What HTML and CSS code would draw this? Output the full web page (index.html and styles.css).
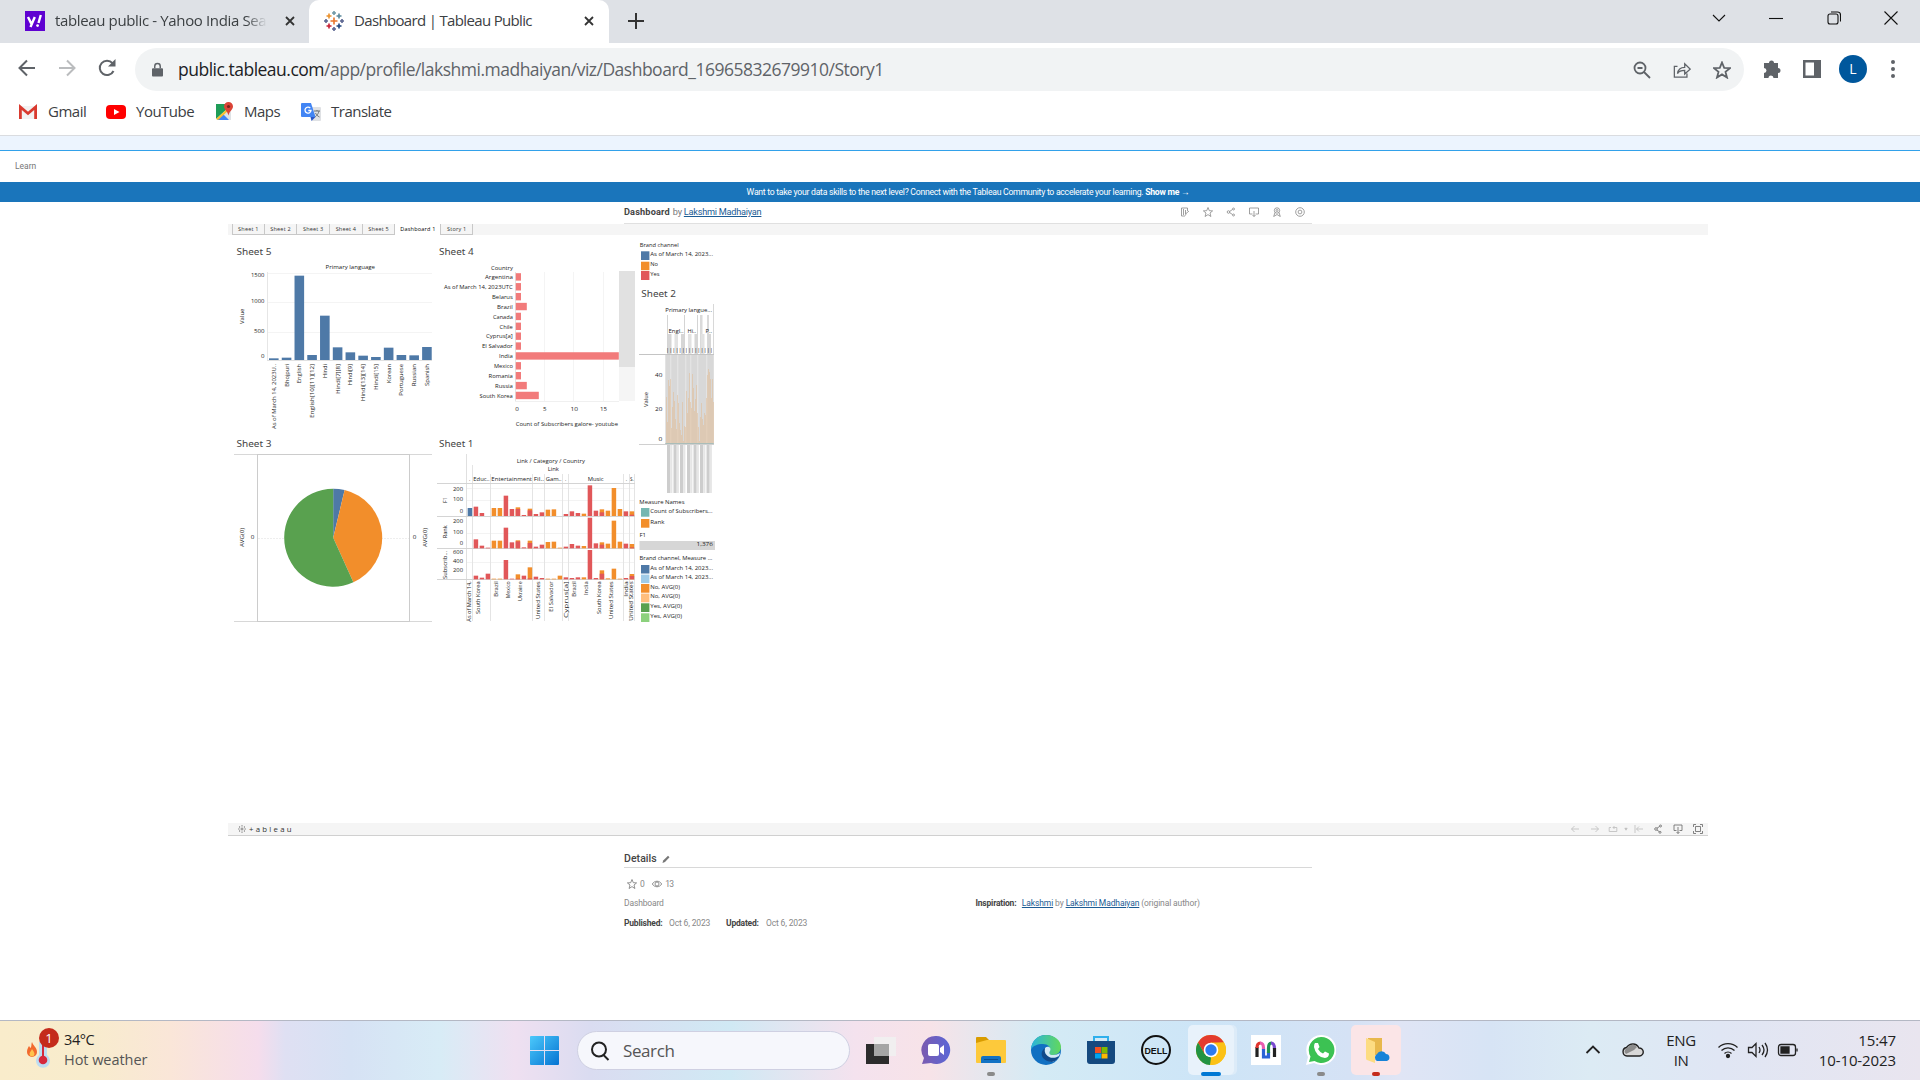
FILE: index.html
```html
<!DOCTYPE html>
<html lang="en">
<head>
<meta charset="utf-8">
<title>Dashboard | Tableau Public</title>
<link rel="stylesheet" href="styles.css">
</head>
<body>
<header class="tabstrip">
  <div class="tab">
    <svg class="fav" viewBox="0 0 20 20"><path fill="#5f01d1" d="M0 0h20v20H0z"/><path d="M3 6l3.200 6.400M9.800 6L5.500 16M13.500 12l2.300-8" stroke="#fff" stroke-width="2.400" fill="none"/><circle cx="12.600" cy="14.600" r="1.400" fill="#fff"/></svg>
    <span class="tab-title faded t-yahoo">tableau public - Yahoo India Sea</span>
    <svg class="x" viewBox="0 0 10 10"><path d="M1 1l8 8M9 1l-8 8"/></svg>
  </div>
  <div class="tab active">
    <svg class="fav" viewBox="0 0 20 20" fill="none" stroke-width="1.600"><path stroke="#e8762c" d="M10 6.500v7M6.500 10h7"/><path stroke="#c72035" d="M5 12.500v5M2.500 15h5"/><path stroke="#eb912c" d="M5 2.500v5M2.500 5h5"/><path stroke="#59879b" d="M15 2.500v5M12.500 5h5"/><path stroke="#1f457e" d="M15 12.500v5M12.500 15h5"/><path stroke="#7199a6" d="M10 0v4M8 2h4"/><path stroke="#5b6591" d="M10 16v4M8 18h4M18 8v4M16 10h4M2 8v4M0 10h4"/></svg>
    <span class="tab-title t-tableau">Dashboard | Tableau Public</span>
    <svg class="x" viewBox="0 0 10 10"><path d="M1 1l8 8M9 1l-8 8"/></svg>
  </div>
  <svg class="plus" viewBox="0 0 16 16"><path d="M8 0v16M0 8h16"/></svg>
  <div class="winctl">
    <svg viewBox="0 0 14 14"><path d="M1 4l6 6 6-6"/></svg>
    <svg viewBox="0 0 14 14"><path d="M0 7.500h14"/></svg>
    <svg viewBox="0 0 14 14"><rect x="1" y="3" width="10" height="10" rx="2"/><path d="M4 1h6.500a3 3 0 0 1 3 3v6.500"/></svg>
    <svg viewBox="0 0 14 14"><path d="M.5.500l13 13M13.500.500l-13 13"/></svg>
  </div>
</header>
<div class="toolbar">
  <nav class="navbtns">
    <svg viewBox="0 0 18 18"><path d="M17 9H2M9 1.500L1.500 9 9 16.500"/></svg>
    <svg class="off" viewBox="0 0 18 18"><path d="M1 9h15M9 1.500L16.500 9 9 16.500"/></svg>
    <svg viewBox="0 0 18 18"><path d="M15.500 12A7.200 7.200 0 1 1 14.500 4.200L16 6"/><path fill="#5f6368" stroke="none" d="M17.500 0v7.500H10z"/></svg>
  </nav>
  <div class="omnibox">
    <svg class="lock" viewBox="0 0 12 16"><path fill="#5f6368" d="M1 6h10q1 0 1 1v7q0 1-1 1H1q-1 0-1-1V7q0-1 1-1z"/><path fill="none" stroke="#5f6368" stroke-width="1.600" d="M3 6V4a3 3 0 0 1 6 0v2"/></svg>
    <span class="url"><b>public.tableau.com</b>/app/profile/lakshmi.madhaiyan/viz/Dashboard_16965832679910/Story1</span>
    <div class="omni-icons">
      <svg viewBox="0 0 18 18"><circle cx="7" cy="7" r="5.500"/><path d="M11 11l6 6M4.500 7h5"/></svg>
      <svg viewBox="0 0 20 20" class="share"><path d="M5 6H1.500v12h14v-4M5 14c.5-4 3-7 8-7V3l6 6-6 5.500v-4c-4 0-6.500 1-8 3.500z"/></svg>
      <svg viewBox="0 0 18 18"><path d="M9 1.500l2.200 5.300 5.800.4-4.500 3.700 1.500 5.600L9 13.400l-5 3.100 1.500-5.600L1 7.200l5.800-.4z"/></svg>
    </div>
  </div>
  <div class="ext">
    <svg viewBox="0 0 20 20"><path fill="#5f6368" d="M2 4h5a2.500 2.500 0 1 1 5 0h4v5a2.500 2.500 0 1 1 0 5v5h-4.500a2.500 2.500 0 0 0-5 0H2v-5a2.500 2.500 0 0 0 0-5z"/></svg>
    <svg viewBox="0 0 20 20"><path fill="#5f6368" fill-rule="evenodd" d="M1 1h18v18H1zM3.500 3.500v13H12v-13z"/></svg>
    <span class="avatar">L</span>
    <svg class="kebab" viewBox="0 0 20 20" fill="#5f6368"><circle cx="10" cy="3" r="2"/><circle cx="10" cy="10" r="2"/><circle cx="10" cy="17" r="2"/></svg>
  </div>
</div>
<nav class="bookmarks">
  <a class="bm b1"><svg viewBox="0 0 20 20"><path fill="#f2f2f2" d="M1 4h18v13H1z"/><path fill="none" stroke="#d93a2f" stroke-width="2.800" d="M2.400 17V5l7.600 6.500L17.600 5v12"/></svg><span>Gmail</span></a>
  <a class="bm b2"><svg viewBox="0 0 20 20"><rect y="3" width="20" height="14" rx="4" fill="#f00"/><path fill="#fff" d="M8 7l5.500 3L8 13z"/></svg><span>YouTube</span></a>
  <a class="bm b3"><svg viewBox="0 0 20 20"><path fill="#1f9d58" d="M2 2h12v9L3 17q-1 0-1-1z"/><path fill="#dfe3e6" d="M2 17L14 6l3 4v8z"/><path fill="#4285f4" d="M3 18l6-6 6 6z"/><path fill="#fbc02d" d="M2 17L13 7l1 2-10 9z"/><path fill="#db4437" d="M14.500 0a4.500 4.500 0 0 1 4.500 4.500c0 3-3.500 4.500-4.500 9-1-4.500-4.500-6-4.500-9A4.500 4.500 0 0 1 14.500 0z"/><circle cx="14.500" cy="4.500" r="1.600" fill="#7b231c"/></svg><span>Maps</span></a>
  <a class="bm b4"><svg viewBox="0 0 20 20"><path fill="#dfe1e4" d="M8 5h11q1 0 1 1v12q0 1-1 1h-8z"/><path fill="#4285f4" d="M1 1h9l4.500 14H1q-1 0-1-1V2q0-1 1-1z"/><path fill="#2a56c6" d="M9.500 15h5l-4 4z"/><path d="M9.300 6.200A3 3 0 1 0 10 8.500H7.300" stroke="#fff" stroke-width="1.300" fill="none"/><path d="M13 9h6M16 8v1M18 9c-1 4-3 5-4 6M14.500 11c1 2 2 3 4 4" stroke="#6b7277" fill="none"/></svg><span>Translate</span></a>
</nav>
<div class="notice"></div>
<div class="learn"><span>Learn</span></div>
<div class="banner"><span>Want to take your data skills to the next level? Connect with the Tableau Community to accelerate your learning. <b>Show me →</b></span></div>
<main class="page">
  <div class="vizhead">
    <p class="viz-title"><b>Dashboard</b> by <a>Lakshmi Madhaiyan</a></p>
    <div class="actions">
      <svg viewBox="0 0 10 10"><path d="M5 9H1.500V1h6v3M3.500 2v6M5.500 3v4M5.500 8.500l.5-2 3-2.500"/></svg>
      <svg viewBox="0 0 10 10"><path d="M5 .500l1.300 3.200 3.300.2L7 6l.9 3.500L5 7.600 2.100 9.500 3 6 .4 3.900l3.300-.2z"/></svg>
      <svg viewBox="0 0 10 10"><circle cx="2.500" cy="5" r="1.300"/><circle cx="7.500" cy="2" r="1"/><circle cx="7.500" cy="8" r="1"/><path d="M3.500 4.500l3-2M3.500 5.500l3 2"/></svg>
      <svg viewBox="0 0 10 10"><path d="M3.500 7H.5V1h9v6h-3M5 4v5.500M3.500 8L5 9.500 6.500 8"/></svg>
      <svg viewBox="0 0 10 10"><circle cx="5" cy="3.500" r="2.700"/><circle cx="5" cy="3.500" r="1"/><path d="M3 5.500L1.700 9.500 5 7.500l3.300 2L7 5.500"/></svg>
      <svg viewBox="0 0 10 10"><circle cx="5" cy="5" r="4.300"/><circle cx="5" cy="5" r="1.900"/></svg>
    </div>
  </div>
  <div class="sheets"><span>Sheet 1</span><span>Sheet 2</span><span>Sheet 3</span><span>Sheet 4</span><span>Sheet 5</span><span class="on">Dashboard 1</span><span class="story">Story 1</span></div>
  <div class="dash">
    <div class="grid">
      <svg id="sheet5" viewBox="228 236 205 194" width="205" height="194"></svg>
      <svg id="sheet4" viewBox="433 236 203 194" width="203" height="194"></svg>
      <svg id="sheet3" viewBox="228 430 205 200" width="205" height="200"></svg>
      <svg id="sheet1" viewBox="433 430 203 200" width="203" height="200"></svg>
    </div>
    <svg id="side" viewBox="636 236 82 394" width="82" height="394"></svg>
  </div>
  <div class="vizbar">
    <svg class="mark" viewBox="0 0 10 10"><path d="M5 3v4M3 5h4M5 0v2M5 8v2M0 5h2M8 5h2M2 1.500v2M8 1.500v2M2 6.500v2M8 6.500v2"/></svg>
    <span class="wordmark">+ableau</span>
    <div class="viztools">
      <svg class="dim" viewBox="0 0 10 10"><path d="M9 5H1.500M4.500 2l-3 3 3 3"/></svg>
      <svg class="dim" viewBox="0 0 10 10"><path d="M1 5h7.500M5.500 2l3 3-3 3"/></svg>
      <svg class="dim revert" viewBox="0 0 10 10"><path d="M3 3.500H1.200v4h7.600v-4H5M6.500 2L5 3.500 6.500 5"/></svg>
      <svg class="dim caret" viewBox="0 0 5 10"><path fill="#bbb" d="M1 4h3L2.500 6.500z"/></svg>
      <svg class="dim" viewBox="0 0 10 10"><path d="M1 1v8M9 5H2.500M5 2.500L2.500 5 5 7.500"/></svg>
      <svg viewBox="0 0 10 10"><circle cx="3" cy="5" r="1.300"/><circle cx="7.500" cy="2" r="1"/><circle cx="7" cy="8.300" r="1"/><path d="M4 4.200L6.500 2.500M4 6l2.200 1.600"/></svg>
      <svg viewBox="0 0 10 10"><path d="M3.500 6.500H1V1h8v5.500H6.500M5 3v6.500M3.500 8L5 9.500 6.500 8"/></svg>
      <svg viewBox="0 0 10 10"><path d="M2.500 2.500h5v5h-5zM.5 3V.500H3M7 .500h2.500V3M.5 7v2.500H3M7 9.500h2.500V7"/></svg>
    </div>
  </div>
  <section class="details">
    <h2>Details <svg viewBox="0 0 8 8"><path d="M.5 8l.7-2.500L6 .700 7.500 2.200 3 7z" fill="#777"/></svg></h2>
    <div class="stats">
      <svg viewBox="0 0 10 10"><path d="M5 .500l1.300 3.200 3.300.2L7 6l.9 3.500L5 7.600 2.100 9.500 3 6 .4 3.900l3.300-.2z"/></svg><span>0</span>
      <svg class="eye" viewBox="0 0 10 10"><path d="M.3 5C2.500 1.300 7.500 1.300 9.700 5 7.500 8.700 2.500 8.700.3 5z"/><circle cx="5" cy="5" r="2"/></svg><span>13</span>
    </div>
    <div class="cols">
      <div class="col"><p class="l1">Dashboard</p><p class="l2"><b>Published:</b><span>Oct 6, 2023</span><b class="upd">Updated:</b><span>Oct 6, 2023</span></p></div>
      <p class="insp"><b>Inspiration:</b> <a>Lakshmi</a> by <a>Lakshmi Madhaiyan</a> (original author)</p>
    </div>
  </section>
</main>
<footer class="taskbar">
  <div class="weather">
    <div class="wicon">
      <svg viewBox="0 0 36 40"><path fill="#f26a2e" d="M7 12c1 4 5 5 5 10a5 5 0 0 1-10 0c0-3 1-4 2-6 1 1 1 2 1.500 2C7 16 6 14 7 12z"/><path fill="#ffc34d" d="M7 19c1 2 2.500 3 2.500 5a2.500 2.500 0 0 1-5 0c0-2 2-3 2.500-5z"/><path fill="#bcdcf2" d="M14 12h8v13a7 7 0 1 1-8 0z"/><circle cx="18" cy="30" r="4.300" fill="#d5283c"/><path fill="#d5283c" d="M17 14h2v14h-2z"/></svg>
      <span class="badge">1</span>
    </div>
    <div class="wtext"><span>34°C</span><span class="sub">Hot weather</span></div>
  </div>
  <div class="start"><svg viewBox="0 0 29 29"><defs><linearGradient id="wg" x1="0" y1="0" x2="1" y2="1"><stop offset="0" stop-color="#4cc9fb"/><stop offset="1" stop-color="#0573d2"/></linearGradient></defs><path fill="url(#wg)" d="M1 0h13v14H0V1q0-1 1-1zM15 0h13q1 0 1 1v13H15zM0 15h14v14H1q-1 0-1-1zM15 15h14v13q0 1-1 1H15z"/></svg></div>
  <div class="search"><svg viewBox="0 0 20 20"><circle cx="9" cy="8.500" r="7"/><path d="M13.500 14l5 5"/></svg><span>Search</span></div>
  <div class="apps">
    <div class="app"><svg viewBox="0 0 30 30"><path fill="#2c2c2c" d="M0 9h23v20H0z"/><path fill="#f0f0f0" fill-opacity=".92" d="M8 2h22v19H8z"/><path fill="#a5a5a5" d="M8 9h15v12H8z"/></svg></div>
    <div class="app"><svg viewBox="0 0 30 30"><defs><linearGradient id="cg" x1="0" y1="0" x2="1" y2="0"><stop offset="0" stop-color="#7b5bb0"/><stop offset="1" stop-color="#5a66d6"/></linearGradient></defs><path fill="url(#cg)" d="M15 1a14 14 0 1 1-5 27l-9 1 2-6A14 14 0 0 1 15 1z"/><rect x="7" y="9" width="11" height="12" rx="2" fill="#fff"/><path fill="#fff" d="M19 13l4-3v10l-4-3z"/></svg></div>
    <div class="app"><svg viewBox="0 0 30 30"><path fill="#d99c00" d="M0 3q0-1 1-1h9l3 3v5H0z"/><path fill="#fdc93b" d="M0 8l11-3h18q1 0 1 1v21q0 1-1 1H1q-1 0-1-1z"/><path fill="#1272c4" d="M5 28v-5q0-2 2-2h16q2 0 2 2v5z"/><path fill="#0b4f91" d="M8 24h14v1H8z"/></svg><i class="dot"></i></div>
    <div class="app"><svg viewBox="0 0 30 30"><defs><linearGradient id="eg" x1="0" y1="0" x2="1" y2="0"><stop offset="0" stop-color="#2bb5dc"/><stop offset="1" stop-color="#62d85c"/></linearGradient></defs><circle cx="15" cy="15" r="15" fill="#1170c2"/><path fill="url(#eg)" d="M0 14C1 5 7 0 15 0c9 0 15 6 15 12 0 5-4 8-8 8-5 0-4-2-3-4 1-4-2-7-7-7-6 0-10 2-12 5z"/><path fill="#d3eaf6" d="M14 13c3-3 7 0 5 3-1 2-1 4 3 4 3 0 5-1 7-2-1 4-4 8-8 9-6-1-10-8-7-14z"/><path fill="#114a8b" d="M14 13c-6 4-4 13 7 14 4-1 6-3 7-6-8 5-16-1-14-8z"/></svg></div>
    <div class="app"><svg viewBox="0 0 30 30"><path d="M8 8V2h14v6" stroke="#2fb0ec" stroke-width="2" fill="none"/><path fill="#15497f" d="M1 6h28v20q0 3-3 3H4q-3 0-3-3z"/><path fill="#f25022" d="M9 12h6v6H9z"/><path fill="#7fba00" d="M15.500 12h6v6h-6z"/><path fill="#00a4ef" d="M9 18.500h6v5H9z"/><path fill="#ffb900" d="M15.500 18.500h6v5h-6z"/></svg></div>
    <div class="app"><svg viewBox="0 0 30 30"><circle cx="15" cy="15" r="14" fill="none" stroke="#111" stroke-width="2"/><text x="15" y="18.500" text-anchor="middle" textLength="23" lengthAdjust="spacingAndGlyphs" class="dell">DELL</text></svg></div>
    <div class="app cur"><svg viewBox="0 0 30 30"><circle cx="15" cy="15" r="15" fill="#fbc116"/><path fill="#e33b2e" d="M2 7.500A15 15 0 0 1 28 7.500H15l-6.500 11.200z"/><path fill="#229342" d="M2 7.500l6.500 11.200L15 22.500 14 30A15 15 0 0 1 2 7.500z"/><path fill="#fbc116" d="M28 7.500A15 15 0 0 1 14 30l7.500-11.300L20 8z"/><circle cx="15" cy="15" r="7.300" fill="#fff"/><circle cx="15" cy="15" r="5.700" fill="#2c7bf0"/></svg><i class="bar"></i></div>
    <div class="app"><svg viewBox="0 0 30 30"><path fill="#fff" d="M0 0h30v30H0z"/><g fill="none" stroke-width="3.200"><path stroke="#222" d="M6 22V12"/><path stroke="#e0352f" d="M6 13q0-5 3.500-5"/><path stroke="#e95cb0" d="M9 8q3.500 0 3.500 5v2"/><path stroke="#2a63d6" d="M12.500 14v8h5v-5"/><path stroke="#219150" d="M17.500 18v-5q0-5 3-5"/><path stroke="#7a4bd0" d="M20 8q3.500 0 3.500 6"/><path stroke="#222" d="M23.500 13v9"/></g></svg></div>
    <div class="app"><svg viewBox="0 0 30 30"><path fill="#fff" d="M15 0a15 15 0 1 1-7 28l-8 2 2-8A15 15 0 0 1 15 0z"/><path fill="#3cc253" d="M15 2a13 13 0 1 1-6.500 24L3 27l1.500-5.500A13 13 0 0 1 15 2z"/><path fill="#fff" d="M9 8h3l1.500 4-1.500 2q2 3.500 5 4.500l2-2 4 2q0 4-4 4.500Q10 22 8 12q0-3 1-4z"/></svg><i class="dot"></i></div>
    <div class="app alert"><svg viewBox="0 0 30 30"><path fill="#e8b84c" d="M7 3h14v17H7z"/><path fill="#fddc82" d="M5 3l9 4v21l-8-3q-1 0-1-2z"/><path fill="#1683d8" d="M16 26a4 4 0 0 1 0-7 5 5 0 0 1 9 0 3.600 3.600 0 0 1 1 7z"/></svg><i class="dot red"></i></div>
  </div>
  <div class="tray">
    <svg viewBox="0 0 22 22"><path d="M4.500 14L11 7.500 17.500 14" stroke-width="1.800"/></svg>
    <svg class="cloud" viewBox="0 0 22 22"><path fill="#d8d8d8" stroke-width="1.400" d="M5 17a4.300 4.300 0 0 1-.5-8.500Q7 5 11 5t6 4a4 4 0 0 1 .5 8z"/><path fill="#8c8c8c" stroke="none" d="M2.500 13Q3 9 6 8.500 10 3 15 8l-3 3-8 4z"/></svg>
    <span class="lang">ENG<br>IN</span>
    <svg class="wifi" viewBox="0 0 22 22"><path d="M1.500 8.500a13.500 13.500 0 0 1 19 0M4.500 11.500a9.200 9.200 0 0 1 13 0M7.500 14.500a5 5 0 0 1 7 0"/><circle cx="11" cy="17" r="1.500" fill="#222"/></svg>
    <svg viewBox="0 0 22 22"><path d="M1.500 8.500H5l4-4v13l-4-4H1.500zM12 8q2 3 0 6M15 6q4 5 0 10M18 4q5 7 0 14"/></svg>
    <svg viewBox="0 0 22 22"><rect x="1.500" y="5.500" width="17" height="11" rx="2.500"/><path fill="#222" d="M4 8h8v6H4zM20 9.500v3"/></svg>
    <span class="clock">15:47<br>10-10-2023</span>
  </div>
</footer>
<script src="charts.js"></script>
</body>
</html>
```
FILE: styles.css
```css
* { box-sizing: border-box; }
body { margin: 0; width: 1920px; height: 1080px; overflow: hidden; display: flex; flex-direction: column; background: #fff; font-family: "Open Sans", "Noto Sans", sans-serif; }
p, h2 { margin: 0; }
svg { flex: none; display: block; }

.tabstrip { height: 43px; background: #dee1e6; display: flex; flex: none; color: #3c4043; font-size: 15px; }
.tab { display: flex; align-items: center; width: 309px; padding: 0 14px 2px 25px; }
.tab.active { width: 300px; background: #fff; border-radius: 10px 10px 0 0; padding: 0 15px 2px; }
.fav { width: 20px; height: 20px; }
.tab-title { margin-left: 10px; margin-top: -2px; white-space: nowrap; flex: 1; }
.t-yahoo { letter-spacing: -.36px; }
.t-tableau { letter-spacing: -.66px; }
.faded { flex: none; width: 212px; overflow: hidden; margin-right: 18px; -webkit-mask-image: linear-gradient(90deg, #000 90%, transparent); }
.x { width: 10px; height: 10px; stroke: #333; stroke-width: 1.8; }
.plus { width: 16px; height: 16px; margin: 13px 0 0 19px; stroke: #333; stroke-width: 2; }
.winctl { margin-left: auto; display: flex; gap: 43.3px; padding: 11px 22px 0 0; }
.winctl svg { width: 14px; height: 14px; fill: none; stroke: #111; stroke-width: 1.1; }

.toolbar { height: 53px; flex: none; display: flex; align-items: center; }
.navbtns { display: flex; gap: 22px; padding-left: 18px; width: 135px; margin-top: -3px; }
.navbtns svg { width: 18px; height: 18px; fill: none; stroke: #5f6368; stroke-width: 2; }
.navbtns .off { stroke: #babcbe; }
.omnibox { width: 1609px; height: 43px; border-radius: 22px; background: #f1f3f4; display: flex; align-items: center; padding: 0 13px 0 17px; }
.lock { width: 11px; height: 16px; }
.url { margin-left: 15px; margin-top: -1px; font-size: 17.5px; color: #5f6368; letter-spacing: -.5px; white-space: nowrap; }
.url b { font-weight: 400; color: #202124; }
.omni-icons { margin-left: auto; display: flex; gap: 22px; }
.omni-icons svg { width: 18px; height: 18px; fill: none; stroke: #5f6368; stroke-width: 1.8; }
.omni-icons .share { stroke-width: 1.4; }
.ext { display: flex; align-items: center; padding-left: 18px; gap: 20px; margin-top: -2px; }
.ext svg { width: 20px; height: 20px; }
.ext .kebab { margin-left: -1px; }
.avatar { width: 28px; height: 28px; border-radius: 50%; background: #00579c; color: #fff; font-size: 14px; line-height: 28px; text-align: center; margin: 0 -3px; }

.bookmarks { height: 40px; flex: none; border-bottom: 1px solid #dadce0; display: flex; font-size: 15px; color: #3c4043; letter-spacing: -.5px; padding: 0 0 7px 18px; }
.bm { display: flex; align-items: center; gap: 10px; }
.bm svg { width: 20px; height: 20px; }
.bm span { margin-top: -2px; }
.b1 { width: 88px; }
.b2 { width: 108px; }
.b3 { width: 87px; }

.notice { height: 15px; flex: none; background: #ecf4fe; border-bottom: 1px solid #32a1ea; }
.learn, .banner, .page { font-family: Roboto, "Liberation Sans", sans-serif; }
.learn { height: 31px; flex: none; padding: 9px 0 0 15px; font-size: 8.500px; line-height: 12px; color: #777; }
.banner { height: 20px; flex: none; background: #1a75bb; color: #fff; text-align: center; font-size: 8.700px; line-height: 20px; padding-left: 16px; letter-spacing: -.28px; }
.page { height: 818px; flex: none; }
.vizhead { width: 688px; height: 22px; margin-left: 624px; display: flex; justify-content: space-between; border-bottom: 1px solid #e0e0e0; }
.viz-title { font-size: 9.200px; line-height: 20px; color: #777; letter-spacing: -.25px; }
.viz-title b { color: #444; letter-spacing: .15px; margin-right: 1px; }
a { color: #1c5c94; text-decoration: underline; text-underline-offset: 1px; }
.bm { color: #3c4043; text-decoration: none; }
.actions { display: flex; gap: 13px; padding: 5px 7px 0 0; }
.actions svg { width: 10px; height: 10px; fill: none; stroke: #888; stroke-width: .8; }
.sheets { width: 1480px; height: 11px; margin-left: 228px; padding-left: 4px; background: #f5f5f5; display: flex; font: 5.500px/10px "Open Sans", sans-serif; color: #333; }
.sheets span { width: 32.700px; text-align: center; border: solid #c8c8c8; border-width: 0 1px 1px 0; letter-spacing: .2px; white-space: nowrap; }
.sheets span:first-child { border-left-width: 1px; }
.sheets .on { width: 46px; background: #fff; border-bottom: 0; color: #000; }
.sheets .story { width: 31.5px; }
.dash { margin-left: 228px; display: flex; height: 588px; align-items: flex-start; padding-top: 1px; }
.grid { display: grid; grid-template-columns: 205px 203px; }
.dash text { font-family: "Open Sans", "Noto Sans", sans-serif; fill: #1c1c1c; }
.dash .heading { fill: #444; font-family: "Noto Sans", "Open Sans", sans-serif; }
.dash line { shape-rendering: crispEdges; }
.vizbar { width: 1480px; height: 13px; margin-left: 228px; background: #f5f5f5; border-bottom: 1px solid #d0d0d0; display: flex; align-items: center; padding: 0 5px 0 10px; }
.mark { width: 8px; height: 8px; stroke: #666; stroke-width: .9; }
.wordmark { margin-left: 3px; font: 7.800px/10px "Open Sans", sans-serif; letter-spacing: 2.250px; color: #333; }
.viztools { margin-left: auto; display: flex; gap: 9.800px; margin-top: -1px; }
.viztools svg { width: 10px; height: 10px; fill: none; stroke: #666; stroke-width: .8; }
.viztools .dim { stroke: #bbb; }
.viztools .revert { margin-left: -1.5px; }
.viztools .caret { width: 4px; margin: 0 -4px; }
.details { width: 688px; margin: 15px 0 0 624px; font-size: 8.500px; color: #888; letter-spacing: -.15px; }
.details h2 { font-size: 10.500px; font-weight: 500; line-height: 14px; height: 17px; color: #444; border-bottom: 1px solid #d8d8d8; display: flex; align-items: center; gap: 5px; letter-spacing: .05px; }
.details h2 svg { width: 8px; height: 8px; }
.stats { display: flex; align-items: center; height: 12px; margin-top: 10px; padding-left: 3px; gap: 3px; letter-spacing: -.6px; }
.stats svg { width: 10px; height: 10px; fill: none; stroke: #777; stroke-width: .8; }
.stats .eye { margin-left: 5px; }
.cols { display: flex; margin-top: 7px; line-height: 12px; }
.col { width: 351.5px; }
.l2 { margin-top: 8px; display: flex; }
.l2 b { color: #444; width: 45px; letter-spacing: -.2px; }
.l2 span { width: 57px; }
.l2 .upd { width: 40px; }
.insp { letter-spacing: -.12px; }
.insp b { color: #444; margin-right: 3.5px; letter-spacing: -.2px; }

.taskbar { height: 60px; flex: none; border-top: 1px solid #b4b8c4; display: flex; align-items: center; color: #222; background: linear-gradient(90deg, #f9eccb 0, #f8eccd 90px, #fae6d8 170px, #f5ddec 258px, #dfe0f3 285px, #d6e2f4 350px, #d8ecf6 440px, #efe0f1 515px, #dadcf1 590px, #d0e9f4 730px, #f4e2ee 855px, #f7e3e8 930px, #d4ebf5 1040px, #cde5f7 1200px, #d5e2f5 1350px, #e0e5f5 1400px, #d7e4f5 1490px, #dcebf4 1590px, #e0e6f4 1720px, #e9e5ef 1920px); }
.weather { display: flex; width: 530px; padding-left: 25px; margin-top: -2px; }
.wicon { position: relative; width: 39px; height: 40px; }
.wicon svg { width: 36px; height: 40px; }
.badge { position: absolute; left: 14px; top: -2px; width: 20px; height: 20px; border-radius: 50%; background: #c42b1c; color: #fff; font-size: 13px; line-height: 20px; text-align: center; }
.wtext { display: flex; flex-direction: column; font-size: 14.500px; line-height: 20px; letter-spacing: -.4px; }
.sub { color: #555; letter-spacing: -.05px; }
.start { width: 47px; }
.start svg { width: 29px; height: 29px; }
.search { width: 273px; height: 39px; border-radius: 20px; background: #f6f7fc; border: 1px solid #cfd0e2; display: flex; align-items: center; padding-left: 12px; gap: 13px; font-size: 17px; letter-spacing: -.4px; color: #555; }
.search svg { width: 20px; height: 20px; fill: none; stroke: #222; stroke-width: 2; }
.apps { margin-left: 3px; margin-top: -1px; display: grid; grid-template-columns: repeat(10, 55.100px); }
.app { position: relative; height: 50px; display: grid; place-items: center; justify-self: center; width: 50px; border-radius: 5px; }
.app svg { width: 30px; height: 30px; }
.cur { background: #e8f2fb; width: 46px; box-shadow: 3px 0 0 #dcebf8; }
.alert { background: #fbe5e7; }
.dot, .bar { position: absolute; bottom: -1px; left: 50%; width: 8px; height: 4px; border-radius: 2px; background: #8a8a8a; transform: translateX(-50%); }
.bar { width: 20px; background: #0078d4; }
.red { background: #c42b1c; }
.dell { font: 700 9px "Liberation Sans", sans-serif; fill: #111; }
.tray { margin-left: auto; margin-top: -2px; display: flex; align-items: center; padding-right: 24px; font-size: 15px; line-height: 20px; letter-spacing: -.1px; }
.tray svg { width: 22px; height: 22px; fill: none; stroke: #222; stroke-width: 1.3; margin-right: 8px; }
.tray .cloud { margin: 0 22px 0 10px; }
.lang { text-align: center; width: 30px; margin-right: 21px; letter-spacing: -.4px; }
.clock { text-align: right; width: 87px; margin-left: 2px; white-space: nowrap; }
```
FILE: charts.js
```js
const NS = 'http://www.w3.org/2000/svg';
function el(svg, name, attrs) {
  const e = document.createElementNS(NS, name);
  for (const k in attrs) e.setAttribute(k, attrs[k]);
  svg.appendChild(e);
  return e;
}
const rect = (s, x, y, w, h, fill) => el(s, 'rect', { x, y, width: w, height: h, fill });
const line = (s, x1, y1, x2, y2, stroke = '#d8d8d8', extra = {}) => el(s, 'line', { x1, y1, x2, y2, stroke, ...extra });
// Horizontal label between x1 and x2, centred on y.
function label(s, str, x1, x2, y, size = 5.6) {
  const t = el(s, 'text', { x: x1, y: y + size * 0.32, 'font-size': size, textLength: x2 - x1, lengthAdjust: 'spacingAndGlyphs' });
  t.textContent = str;
  if (size > 8) t.setAttribute('class', 'heading');
}
// Label that reads upwards, from y2 (bottom) to y1 (top).
function vlabel(s, str, x, y1, y2, size = 5.6) {
  el(s, 'text', { transform: `translate(${x + size * 0.32} ${y2}) rotate(-90)`, 'font-size': size, textLength: y2 - y1, lengthAdjust: 'spacingAndGlyphs' }).textContent = str;
}
const get = id => document.getElementById(id);
const BLUE = '#4e79a7', ORANGE = '#f28e2b', RED = '#e15759', GREEN = '#59a14f';

// Sheet 5
let s = get('sheet5');
label(s, 'Sheet 5', 236.500, 271.500, 252, 9);
label(s, 'Primary language', 325.500, 375, 267);
[['1500', 251, 275], ['1000', 251, 301], ['500', 254, 331], ['0', 261, 356]].forEach(([t, x, y]) => label(s, t, x, 264.500, y, 5.3));
[273, 302, 332].forEach(y => line(s, 267, y, 432, y, '#f4f4f4'));
line(s, 267.500, 272, 267.500, 360, '#e6e6e6');
line(s, 267, 360.500, 432, 360.500, '#e0e0e0');
vlabel(s, 'Value', 242, 308.500, 324);
[['As of March 14, 2023U..', 415, 627], ['Bhojpuri', 413, 500], ['English', 167, 490], ['English[10][11][12]', 405, 593], ['Hindi', 287, 474], ['Hindi[7][8]', 382, 521], ['Hindi[9]', 397, 496], ['Hindi[13][14]', 407, 543], ['Hindi[15]', 411, 509], ['Korean', 383, 489], ['Portuguese', 405, 527], ['Russian', 406, 499], ['Spanish', 381, 498]].forEach(([t, top, end], i) => {
  const x = 269 + i * 12.760, y = 220 + top / 3;
  rect(s, x, y, 9.6, 360 - y, BLUE);
  vlabel(s, t, x + 5, 364, 220 + end / 3);
});

// Sheet 4
s = get('sheet4');
label(s, 'Sheet 4', 439, 473.700, 252, 9);
label(s, 'Country', 491, 513, 268);
[544, 573, 603].forEach(x => line(s, x, 272, x, 401, '#f4f4f4'));
line(s, 515.500, 272, 515.500, 401, '#e4e4e4');
line(s, 515, 401, 619, 401, '#f0f0f0');
rect(s, 619, 271, 16, 130, '#f5f5f5');
rect(s, 619, 271, 16, 96, '#e1e1e1');
[['Argentina', 485, 5.2], ['As of March 14, 2023UTC', 444, 5.2], ['Belarus', 492, 5.2], ['Brazil', 497, 11], ['Canada', 493, 5.2], ['Chile', 499.500, 5.2], ['Cyprus[a]', 486, 5.2], ['El Salvador', 482, 5.2], ['India', 499, 103], ['Mexico', 494, 5.2], ['Romania', 488.500, 5.2], ['Russia', 495, 11], ['South Korea', 479.500, 23]].forEach(([t, x, w], i) => {
  const y = 273.200 + i * 9.880;
  rect(s, 515.800, y, w, 7.400, '#f27b7b');
  label(s, t, x, 512.800, y + 4.200);
});
[['0', 515.200, 518.800], ['5', 543, 546.500], ['10', 570.500, 578], ['15', 600, 607]].forEach(([t, a, b]) => label(s, t, a, b, 409, 5.3));
label(s, 'Count of Subscribers galore- youtube', 515.700, 618, 424);

// Sheet 3
s = get('sheet3');
label(s, 'Sheet 3', 236.500, 271.500, 444, 9);
line(s, 234, 454.500, 432, 454.500);
line(s, 234, 621.500, 432, 621.500);
el(s, 'rect', { x: 257.500, y: 454.500, width: 152, height: 167, fill: 'none', stroke: '#ccc' });
line(s, 258, 538.500, 409, 538.500, '#eee', { 'stroke-dasharray': '2 1' });
const CX = 333.200, CY = 537.700, R = 49;
function wedge(a, b, fill) {
  const p = d => `${CX + R * Math.sin(d * Math.PI / 180)} ${CY - R * Math.cos(d * Math.PI / 180)}`;
  el(s, 'path', { d: `M${CX} ${CY}L${p(a)}A${R} ${R} 0 ${b - a > 180 ? 1 : 0} 1 ${p(b)}Z`, fill });
}
wedge(0, 13.500, BLUE);
wedge(13.500, 155.700, ORANGE);
wedge(155.700, 360, GREEN);
vlabel(s, 'AVG(0)', 242, 528, 547);
vlabel(s, 'AVG(0)', 425, 528, 547);
label(s, '0', 250.700, 254.300, 537.500, 5.300);
label(s, '0', 412.700, 416.300, 537.500, 5.300);

// Sheet 1; offsets below are thirds of a pixel from (430, 430)
s = get('sheet1');
const P = v => 430 + v / 3;
label(s, 'Sheet 1', 439, 473.500, 444, 9);
label(s, 'Link / Category / Country', P(260), P(465), P(93));
label(s, 'Link', P(353), P(387), P(119), 5.300);
[['.', 117, 121], ['Educ..', 130, 179], ['Entertainment', 184, 306], ['Fil..', 311, 342], ['Gam..', 347, 395], ['.', 405, 409], ['Music', 473, 521], ['.', 587, 591], ['S.', 600, 611]].forEach(([t, a, b]) => label(s, t, P(a), P(b), P(147), 5.300));
[['200', 177], ['100', 207], ['200', 273], ['100', 307], ['600', 366], ['400', 393], ['200', 420]].forEach(([t, y]) => label(s, t, P(69), P(99), P(y), 5.300));
[244, 340].forEach(y => label(s, '0', P(89), P(99), P(y), 5.300));
vlabel(s, 'F1', P(46), P(202), P(219));
vlabel(s, 'Rank', P(46), P(286), P(325));
vlabel(s, 'Subscrib...', P(46), P(363), P(447));
[174, 211, 310, 397].forEach(y => line(s, P(110), P(y), P(614), P(y), '#f3f3f3'));
line(s, P(110), P(73), P(110), P(573), '#e0e0e0');
[[128, 105], [182, 132], [308, 132], [344, 132], [398, 132], [416, 132], [580, 132], [598, 132], [614, 132]].forEach(([x, y]) => line(s, P(x), P(y), P(x), P(573), '#e4e4e4'));
[161, 258, 356, 448].forEach(y => line(s, P(20), P(y), P(614), P(y), '#d4d4d4'));
// Each bar: [column, top, colour, top of the second (red) part]
const rows = [
  [258, [[0, 234, BLUE], [1, 230], [2, 249], [4, 234, ORANGE], [5, 234, ORANGE], [6, 197], [7, 237], [8, 232, ORANGE, 237], [9, 255], [10, 236, ORANGE, 241], [11, 252], [12, 247], [13, 239, ORANGE], [14, 238, ORANGE], [16, 252], [17, 244], [18, 249], [19, 251, ORANGE], [20, 166], [21, 242], [22, 238, ORANGE, 247], [23, 242, ORANGE], [24, 174, ORANGE], [25, 237, ORANGE], [26, 244], [27, 244, ORANGE, 254]]],
  [355, [[1, 328], [2, 347], [3, 353], [4, 332, ORANGE], [5, 332, ORANGE], [6, 293], [7, 337], [8, 331, ORANGE, 334], [9, 352], [10, 332, ORANGE, 339], [11, 350], [12, 344], [13, 336, ORANGE], [14, 335, ORANGE], [15, 353, ORANGE], [16, 350], [17, 342], [18, 347], [19, 348, ORANGE], [20, 263], [21, 340], [22, 337, ORANGE, 344], [23, 341, ORANGE], [24, 272, ORANGE], [25, 335, ORANGE], [26, 341], [27, 342, ORANGE, 352]]],
  [448, [[1, 437], [2, 443], [3, 431], [4, 446, ORANGE], [5, 446, ORANGE], [6, 390], [7, 446], [8, 433, ORANGE, 446], [9, 437], [10, 412, ORANGE, 445], [11, 440], [12, 444], [13, 446, ORANGE], [14, 446, ORANGE], [15, 437, ORANGE], [16, 442], [17, 444], [18, 442], [19, 442, ORANGE], [20, 360], [21, 444], [22, 421, ORANGE, 431], [23, 445, ORANGE], [24, 416, ORANGE], [25, 446, ORANGE], [26, 444], [27, 432, ORANGE, 438]]]
];
rows.forEach(([base, bars]) => bars.forEach(([c, top, fill, split]) => {
  const x = P(113 + c * 18);
  rect(s, x, P(top), 4.500, (base - top) / 3, fill || RED);
  if (split) rect(s, x, P(split), 4.500, (base - split) / 3, RED);
}));
[['As of March 14,', 118, 575], ['South Korea', 145, 552], ['Brazil', 199, 500], ['Mexico', 235, 505], ['Ukraine', 271, 513], ['United States', 326, 567], ['El Salvador', 364, 545], ['Cyprus[a]', 408, 564], ['Brazil', 432, 500], ['India', 469, 495], ['South Korea', 508, 552], ['United States', 544, 567], ['India', 588, 500], ['United States', 605, 572]].forEach(([t, x, end]) => vlabel(s, t, P(x), P(454), P(end)));

// Right column: legends and Sheet 2
s = get('side');
function legend(items) {
  items.forEach(([t, fill, y, h, x2]) => { rect(s, 641, y, 8.400, h, fill); label(s, t, 650.300, x2, y + h * 0.34); });
}
label(s, 'Brand channel', 639.700, 678.700, 245);
legend([['As of March 14, 2023...', BLUE, 251.300, 8.700, 713], ['No', ORANGE, 261.700, 8.500, 658], ['Yes', RED, 271, 9, 659.500]]);
label(s, 'Sheet 2', 641.300, 676, 294, 9);
label(s, 'Primary langue...', 665.300, 712, 310);
line(s, 713.500, 304, 713.500, 355);
[667.500, 684.500, 697.500].forEach(x => line(s, x, 315, x, 355, '#d4d4d4'));
rect(s, 700, 315, 2.500, 40, '#dadada');
rect(s, 707, 315, 2, 40, '#dadada');
[668, 674.500, 681, 688, 694.500, 701, 707.500].forEach((x, i) => {
  rect(s, x, 334, 3.500, 21, i % 2 ? '#e2e2e2' : '#d6d6d6');
  rect(s, x - 1, 445, 3.200, 48, '#cdcdcd');
  rect(s, x + 2.200, 445, 2.200, 48, '#e6e6e6');
});
[['Engl..', 668.500, 683.500], ['Hi..', 687.500, 696], ['P..', 705.500, 712]].forEach(([t, a, b]) => label(s, t, a, b, 331, 5.300));
label(s, '|||||||||||||||', 666, 713, 351, 4.500);
rect(s, 665.300, 355, 48.500, 89, '#d8d8d8');
[670, 677, 685, 690, 697, 706].forEach(x => rect(s, x, 355, 1.300, 89, '#e3e3e3'));
const peaks = [42, 67, 25, 31, 24, 73, 52, 37, 46, 64, 74, 40, 48, 68, 75, 80, 47, 86, 71, 72, 36, 58, 43, 18, 47, 53, 19, 33, 56, 44, 30, 58, 72, 86, 62, 48, 64, 70, 58, 60, 43, 20, 14, 17, 24, 43, 24, 47];
peaks.forEach((p, i) => {
  const y = 355 + p;
  el(s, 'rect', { x: 666 + i, y, width: 0.8, height: 443 - y, fill: '#e0bf9c', 'fill-opacity': 0.75 });
});
line(s, 639, 354.500, 714, 354.500, '#c4c4c4');
line(s, 639, 444.500, 714, 444.500, '#d0d0d0');
rect(s, 665.300, 443, 48.500, 1, '#a9bdb9');
[['40', 655, 375.700], ['20', 655, 409.700], ['0', 658.500, 439]].forEach(([t, x, y]) => label(s, t, x, 662.300, y, 5.300));
vlabel(s, 'Value', 646, 392, 407);
label(s, 'Measure Names', 639.300, 684.500, 502);
legend([['Count of Subscribers...', '#76b7b2', 508, 8.700, 712.500], ['Rank', ORANGE, 519, 8.700, 664.500]]);
label(s, 'F1', 639.500, 646, 535);
rect(s, 639.500, 541, 75.500, 9, '#d6d6d6');
label(s, '1,376', 696.500, 713, 544.500);
label(s, 'Brand channel, Measure ...', 639.500, 712.300, 558);
legend([['As of March 14, 2023...', BLUE, 565, 8.500, 713], ['As of March 14, 2023...', '#a0cbe8', 574.600, 8.500, 713], ['No, AVG(0)', ORANGE, 584, 8.700, 680], ['No, AVG(0)', '#ffbe7d', 593.600, 8.700, 680], ['Yes, AVG(0)', GREEN, 603.300, 8.700, 682], ['Yes, AVG(0)', '#8cd17d', 613.300, 8.700, 682]]);
```
